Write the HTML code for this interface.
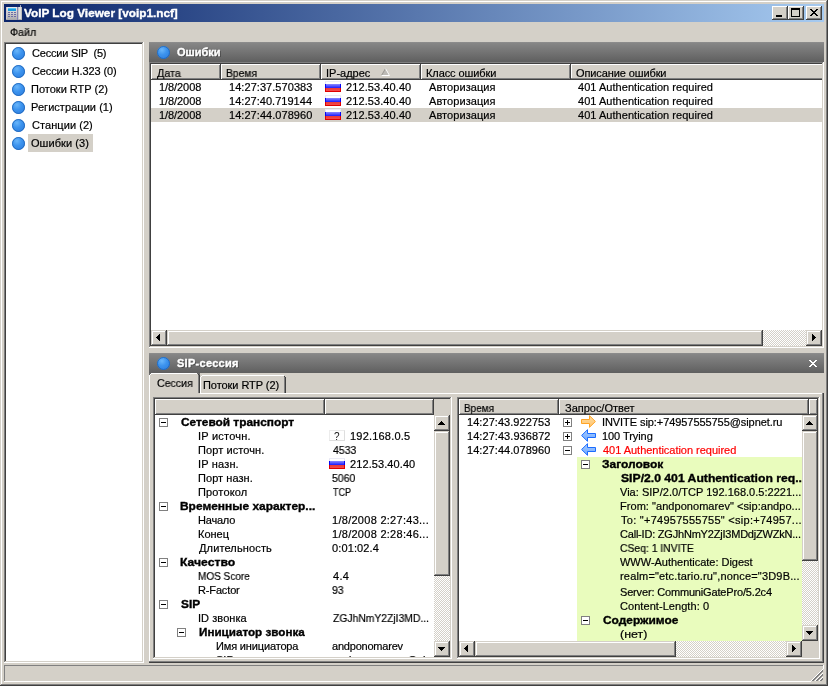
<!DOCTYPE html>
<html lang="ru"><head><meta charset="utf-8"><title>VoIP Log Viewer [voip1.ncf]</title>
<style>
html,body{margin:0;padding:0}
body{width:828px;height:686px;overflow:hidden;background:#D4D0C8;position:relative;font-family:"Liberation Sans",sans-serif;font-size:11px;color:#000}
#w{position:absolute;left:0;top:0;width:828px;height:686px;overflow:hidden}
#w>div,#w>svg,#w>span{position:absolute;box-sizing:border-box}
.t{white-space:nowrap;line-height:14px;height:14px;font-size:11px;transform-origin:0 0;will-change:transform;-webkit-text-stroke:.2px currentColor}
.b{font-weight:bold;-webkit-text-stroke:.35px currentColor}
.hd{color:#fff;text-shadow:1px 1px 0 rgba(40,40,40,.55)}
</style></head><body>
<svg width="0" height="0" style="position:absolute"><defs>
<radialGradient id="bg" cx="38%" cy="30%" r="75%"><stop offset="0" stop-color="#6ab6fa"/><stop offset=".5" stop-color="#3c93ee"/><stop offset="1" stop-color="#2f80e0"/></radialGradient>
<linearGradient id="fw" x1="0" y1="0" x2="0" y2="1"><stop offset="0" stop-color="#fff"/><stop offset="1" stop-color="#e8e8f0"/></linearGradient>
<linearGradient id="fb" x1="0" y1="0" x2="0" y2="1"><stop offset="0" stop-color="#8a8aff"/><stop offset="1" stop-color="#1a1aff"/></linearGradient>
<linearGradient id="fr" x1="0" y1="0" x2="0" y2="1"><stop offset="0" stop-color="#e83838"/><stop offset="1" stop-color="#f54a4a"/></linearGradient>
<linearGradient id="ao" x1="0" y1="0" x2="0" y2="1"><stop offset="0" stop-color="#ffdca0"/><stop offset="1" stop-color="#ffc46e"/></linearGradient>
<linearGradient id="ab" x1="0" y1="0" x2="0" y2="1"><stop offset="0" stop-color="#a8ccff"/><stop offset="1" stop-color="#6ea8ff"/></linearGradient>
<linearGradient id="ib" x1="0" y1="0" x2="0" y2="1"><stop offset="0" stop-color="#ececec"/><stop offset="1" stop-color="#a9a9ab"/></linearGradient>
<linearGradient id="ih" x1="0" y1="0" x2="1" y2="0"><stop offset="0" stop-color="#b6b6b8"/><stop offset=".5" stop-color="#f0f0f0"/><stop offset="1" stop-color="#acacae"/></linearGradient>
</defs></svg>
<div id="w">
<div style="left:0px;top:0px;width:828px;height:686px;background:#404040;"></div>
<div style="left:0px;top:0px;width:827px;height:685px;background:#D4D0C8;"></div>
<div style="left:1px;top:1px;width:826px;height:684px;background:#808080;"></div>
<div style="left:1px;top:1px;width:825px;height:683px;background:#FFFFFF;"></div>
<div style="left:2px;top:2px;width:824px;height:682px;background:#D4D0C8;"></div>
<div style="left:4px;top:4px;width:820px;height:18px;background:linear-gradient(90deg,#0A246A,#A6CAF0);"></div>
<svg style="left:6px;top:5px" width="16" height="16" viewBox="0 0 16 16" shape-rendering="crispEdges">
<rect x="14" y="0" width="1" height="2" fill="#a8a8c0"/>
<rect x="0" y="2" width="11" height="13" fill="url(#ib)"/>
<rect x="0" y="2" width="1" height="13" fill="#cfc8d0"/><rect x="0" y="14" width="11" height="1" fill="#a9a9ad"/>
<rect x="2" y="3" width="8" height="3" fill="#1c9fe0"/><rect x="2" y="3" width="8" height="1" fill="#58c4f8"/>
<g fill="#6c6ca6"><rect x="2" y="7" width="2" height="1"/><rect x="5" y="7" width="2" height="1"/><rect x="8" y="7" width="2" height="1"/><rect x="2" y="9" width="2" height="1"/><rect x="5" y="9" width="2" height="1"/><rect x="8" y="9" width="2" height="1"/><rect x="2" y="11" width="2" height="1"/><rect x="5" y="11" width="2" height="1"/><rect x="8" y="11" width="2" height="1"/></g>
<rect x="11" y="2" width="1" height="13" fill="#8484b4"/>
<rect x="12" y="2" width="4" height="13" fill="url(#ih)"/><rect x="12" y="14" width="4" height="1" fill="#b0b0b4"/>
</svg>
<div style="left:772px;top:6px;width:16px;height:14px;background:#404040;"></div>
<div style="left:772px;top:6px;width:15px;height:13px;background:#FFFFFF;"></div>
<div style="left:773px;top:7px;width:14px;height:12px;background:#808080;"></div>
<div style="left:773px;top:7px;width:13px;height:11px;background:#D4D0C8;"></div>
<div style="left:788px;top:6px;width:16px;height:14px;background:#404040;"></div>
<div style="left:788px;top:6px;width:15px;height:13px;background:#FFFFFF;"></div>
<div style="left:789px;top:7px;width:14px;height:12px;background:#808080;"></div>
<div style="left:789px;top:7px;width:13px;height:11px;background:#D4D0C8;"></div>
<div style="left:806px;top:6px;width:16px;height:14px;background:#404040;"></div>
<div style="left:806px;top:6px;width:15px;height:13px;background:#FFFFFF;"></div>
<div style="left:807px;top:7px;width:14px;height:12px;background:#808080;"></div>
<div style="left:807px;top:7px;width:13px;height:11px;background:#D4D0C8;"></div>
<div style="left:776px;top:15px;width:6px;height:2px;background:#000;"></div>
<div style="left:791px;top:8px;width:9px;height:9px;border:1px solid #000;border-top:2px solid #000"></div>
<svg style="left:810px;top:9px" width="8" height="7" viewBox="0 0 8 7" shape-rendering="crispEdges"><path d="M0 0h2v1h1v1h2v-1h1v-1h2v1h-1v1h-1v1h-1v1h1v1h1v1h1v1h-2v-1h-1v-1h-2v1h-1v1h-2v-1h1v-1h1v-1h1v-1h-1v-1h-1v-1h-1z" fill="#000"/></svg>
<div style="left:4px;top:42px;width:140px;height:621px;background:#FFFFFF;"></div>
<div style="left:4px;top:42px;width:139px;height:620px;background:#808080;"></div>
<div style="left:5px;top:43px;width:138px;height:619px;background:#D4D0C8;"></div>
<div style="left:5px;top:43px;width:137px;height:618px;background:#404040;"></div>
<div style="left:6px;top:44px;width:136px;height:617px;background:#fff;"></div>
<div style="left:28px;top:134px;width:65px;height:18px;background:#D4D0C8;"></div>
<svg style="left:10px;top:45px" width="17" height="17" viewBox="0 0 17 17"><circle cx="8.5" cy="8.5" r="6.5" fill="url(#bg)"/><circle cx="8.5" cy="8.5" r="6.0" fill="none" stroke="#1b60b4" stroke-opacity=".75" stroke-width="1"/></svg>
<svg style="left:10px;top:63px" width="17" height="17" viewBox="0 0 17 17"><circle cx="8.5" cy="8.5" r="6.5" fill="url(#bg)"/><circle cx="8.5" cy="8.5" r="6.0" fill="none" stroke="#1b60b4" stroke-opacity=".75" stroke-width="1"/></svg>
<svg style="left:10px;top:81px" width="17" height="17" viewBox="0 0 17 17"><circle cx="8.5" cy="8.5" r="6.5" fill="url(#bg)"/><circle cx="8.5" cy="8.5" r="6.0" fill="none" stroke="#1b60b4" stroke-opacity=".75" stroke-width="1"/></svg>
<svg style="left:10px;top:99px" width="17" height="17" viewBox="0 0 17 17"><circle cx="8.5" cy="8.5" r="6.5" fill="url(#bg)"/><circle cx="8.5" cy="8.5" r="6.0" fill="none" stroke="#1b60b4" stroke-opacity=".75" stroke-width="1"/></svg>
<svg style="left:10px;top:117px" width="17" height="17" viewBox="0 0 17 17"><circle cx="8.5" cy="8.5" r="6.5" fill="url(#bg)"/><circle cx="8.5" cy="8.5" r="6.0" fill="none" stroke="#1b60b4" stroke-opacity=".75" stroke-width="1"/></svg>
<svg style="left:10px;top:135px" width="17" height="17" viewBox="0 0 17 17"><circle cx="8.5" cy="8.5" r="6.5" fill="url(#bg)"/><circle cx="8.5" cy="8.5" r="6.0" fill="none" stroke="#1b60b4" stroke-opacity=".75" stroke-width="1"/></svg>
<div style="left:149px;top:42px;width:675px;height:20px;background:linear-gradient(180deg,#8e8e8e 0%,#858585 8%,#5f5f5f 100%);"></div>
<svg style="left:155px;top:44px" width="17" height="17" viewBox="0 0 17 17"><circle cx="8.5" cy="8.5" r="6.5" fill="url(#bg)"/><circle cx="8.5" cy="8.5" r="6.0" fill="none" stroke="#1b60b4" stroke-opacity=".75" stroke-width="1"/></svg>
<div style="left:149px;top:62px;width:675px;height:286px;background:#FFFFFF;"></div>
<div style="left:149px;top:62px;width:674px;height:285px;background:#808080;"></div>
<div style="left:150px;top:63px;width:673px;height:284px;background:#D4D0C8;"></div>
<div style="left:150px;top:63px;width:672px;height:283px;background:#404040;"></div>
<div style="left:151px;top:64px;width:671px;height:282px;background:#fff;"></div>
<div style="left:151px;top:64px;width:70px;height:16px;background:#404040;"></div>
<div style="left:151px;top:64px;width:69px;height:15px;background:#FFFFFF;"></div>
<div style="left:152px;top:65px;width:68px;height:14px;background:#808080;"></div>
<div style="left:152px;top:65px;width:67px;height:13px;background:#D4D0C8;"></div>
<div style="left:221px;top:64px;width:100px;height:16px;background:#404040;"></div>
<div style="left:221px;top:64px;width:99px;height:15px;background:#FFFFFF;"></div>
<div style="left:222px;top:65px;width:98px;height:14px;background:#808080;"></div>
<div style="left:222px;top:65px;width:97px;height:13px;background:#D4D0C8;"></div>
<div style="left:321px;top:64px;width:100px;height:16px;background:#404040;"></div>
<div style="left:321px;top:64px;width:99px;height:15px;background:#FFFFFF;"></div>
<div style="left:322px;top:65px;width:98px;height:14px;background:#808080;"></div>
<div style="left:322px;top:65px;width:97px;height:13px;background:#D4D0C8;"></div>
<div style="left:421px;top:64px;width:150px;height:16px;background:#404040;"></div>
<div style="left:421px;top:64px;width:149px;height:15px;background:#FFFFFF;"></div>
<div style="left:422px;top:65px;width:148px;height:14px;background:#808080;"></div>
<div style="left:422px;top:65px;width:147px;height:13px;background:#D4D0C8;"></div>
<div style="left:571px;top:64px;width:251px;height:16px;background:#404040;"></div>
<div style="left:571px;top:64px;width:251px;height:15px;background:#808080;"></div>
<div style="left:571px;top:64px;width:251px;height:14px;background:#FFFFFF;"></div>
<div style="left:572px;top:65px;width:250px;height:13px;background:#D4D0C8;"></div>
<svg style="left:381px;top:68px" width="9" height="8" viewBox="0 0 9 8"><path d="M4.5 0L9 7.5H0z" fill="#bdbbb6"/><path d="M4.5 .5L.5 7.5" stroke="#9a9892" fill="none"/><path d="M4.5 .5L8.5 7.5H.5" stroke="#fff" fill="none"/></svg>
<div style="left:151px;top:108px;width:671px;height:14px;background:#D4D0C8;"></div>
<svg style="left:325px;top:81px" width="16" height="11" viewBox="0 0 16 11" shape-rendering="crispEdges"><rect width="16" height="11" fill="#fff"/><rect width="16" height="1" fill="#ebebf6"/><rect y="1" width="1" height="2" fill="#e6e6f4"/><rect x="15" y="1" width="1" height="2" fill="#e6e6f4"/><rect y="3" width="16" height="4" fill="#0606f2"/><rect x="1" y="3" width="14" height="4" fill="url(#fb)"/><rect y="7" width="16" height="4" fill="#e00000"/><rect x="1" y="7" width="14" height="3" fill="url(#fr)"/></svg>
<svg style="left:325px;top:95px" width="16" height="11" viewBox="0 0 16 11" shape-rendering="crispEdges"><rect width="16" height="11" fill="#fff"/><rect width="16" height="1" fill="#ebebf6"/><rect y="1" width="1" height="2" fill="#e6e6f4"/><rect x="15" y="1" width="1" height="2" fill="#e6e6f4"/><rect y="3" width="16" height="4" fill="#0606f2"/><rect x="1" y="3" width="14" height="4" fill="url(#fb)"/><rect y="7" width="16" height="4" fill="#e00000"/><rect x="1" y="7" width="14" height="3" fill="url(#fr)"/></svg>
<svg style="left:325px;top:109px" width="16" height="11" viewBox="0 0 16 11" shape-rendering="crispEdges"><rect width="16" height="11" fill="#fff"/><rect width="16" height="1" fill="#ebebf6"/><rect y="1" width="1" height="2" fill="#e6e6f4"/><rect x="15" y="1" width="1" height="2" fill="#e6e6f4"/><rect y="3" width="16" height="4" fill="#0606f2"/><rect x="1" y="3" width="14" height="4" fill="url(#fb)"/><rect y="7" width="16" height="4" fill="#e00000"/><rect x="1" y="7" width="14" height="3" fill="url(#fr)"/></svg>
<div style="left:151px;top:330px;width:671px;height:16px;background:#E9E7E3;background-image:conic-gradient(#fff 25%,#D4D0C8 0 50%,#fff 0 75%,#D4D0C8 0);background-size:2px 2px;"></div>
<div style="left:151px;top:330px;width:16px;height:16px;background:#404040;"></div>
<div style="left:151px;top:330px;width:15px;height:15px;background:#D4D0C8;"></div>
<div style="left:152px;top:331px;width:14px;height:14px;background:#808080;"></div>
<div style="left:152px;top:331px;width:13px;height:13px;background:#FFFFFF;"></div>
<div style="left:153px;top:332px;width:12px;height:12px;background:#D4D0C8;"></div>
<svg style="left:156px;top:334px" width="4" height="7" viewBox="0 0 4 7" shape-rendering="crispEdges"><path d="M3 0h1v7h-1v-1h-1v-1h-1v-1h-1v-1h1v-1h1v-1h1z" fill="#000"/></svg>
<div style="left:806px;top:330px;width:16px;height:16px;background:#404040;"></div>
<div style="left:806px;top:330px;width:15px;height:15px;background:#D4D0C8;"></div>
<div style="left:807px;top:331px;width:14px;height:14px;background:#808080;"></div>
<div style="left:807px;top:331px;width:13px;height:13px;background:#FFFFFF;"></div>
<div style="left:808px;top:332px;width:12px;height:12px;background:#D4D0C8;"></div>
<svg style="left:812px;top:334px" width="4" height="7" viewBox="0 0 4 7" shape-rendering="crispEdges"><path d="M0 0h1v1h1v1h1v1h1v1h-1v1h-1v1h-1v1h-1z" fill="#000"/></svg>
<div style="left:167px;top:330px;width:596px;height:16px;background:#404040;"></div>
<div style="left:167px;top:330px;width:595px;height:15px;background:#D4D0C8;"></div>
<div style="left:168px;top:331px;width:594px;height:14px;background:#808080;"></div>
<div style="left:168px;top:331px;width:593px;height:13px;background:#FFFFFF;"></div>
<div style="left:169px;top:332px;width:592px;height:12px;background:#D4D0C8;"></div>
<div style="left:149px;top:353px;width:675px;height:20px;background:linear-gradient(180deg,#8e8e8e 0%,#858585 8%,#5f5f5f 100%);"></div>
<svg style="left:155px;top:355px" width="17" height="17" viewBox="0 0 17 17"><circle cx="8.5" cy="8.5" r="6.5" fill="url(#bg)"/><circle cx="8.5" cy="8.5" r="6.0" fill="none" stroke="#1b60b4" stroke-opacity=".75" stroke-width="1"/></svg>
<svg style="left:809px;top:360px" width="8" height="7" viewBox="0 0 8 7" shape-rendering="crispEdges"><path d="M0 0h1v1h-1zM1 0h1v1h-1zM6 0h1v1h-1zM7 0h1v1h-1zM1 1h1v1h-1zM2 1h1v1h-1zM5 1h1v1h-1zM6 1h1v1h-1zM2 2h1v1h-1zM3 2h1v1h-1zM4 2h1v1h-1zM5 2h1v1h-1zM3 3h1v1h-1zM4 3h1v1h-1zM2 4h1v1h-1zM3 4h1v1h-1zM4 4h1v1h-1zM5 4h1v1h-1zM1 5h1v1h-1zM2 5h1v1h-1zM5 5h1v1h-1zM6 5h1v1h-1zM0 6h1v1h-1zM1 6h1v1h-1zM6 6h1v1h-1zM7 6h1v1h-1z" fill="#fff"/></svg>
<div style="left:149px;top:393px;width:675px;height:270px;background:#404040;"></div>
<div style="left:149px;top:393px;width:674px;height:269px;background:#808080;"></div>
<div style="left:149px;top:393px;width:673px;height:268px;background:#FFFFFF;"></div>
<div style="left:150px;top:394px;width:672px;height:267px;background:#D4D0C8;"></div>
<div style="left:200px;top:375px;width:86px;height:18px;background:#D4D0C8;"></div>
<div style="left:202px;top:375px;width:82px;height:1px;background:#FFFFFF;"></div>
<div style="left:200px;top:377px;width:1px;height:16px;background:#FFFFFF;"></div>
<div style="left:201px;top:376px;width:1px;height:1px;background:#FFFFFF;"></div>
<div style="left:284px;top:377px;width:1px;height:16px;background:#808080;"></div>
<div style="left:285px;top:377px;width:1px;height:16px;background:#404040;"></div>
<div style="left:284px;top:376px;width:1px;height:1px;background:#404040;"></div>
<div style="left:149px;top:373px;width:51px;height:21px;background:#D4D0C8;"></div>
<div style="left:149px;top:375px;width:1px;height:19px;background:#FFFFFF;"></div>
<div style="left:150px;top:374px;width:1px;height:1px;background:#FFFFFF;"></div>
<div style="left:151px;top:373px;width:46px;height:1px;background:#FFFFFF;"></div>
<div style="left:198px;top:375px;width:1px;height:18px;background:#808080;"></div>
<div style="left:199px;top:375px;width:1px;height:18px;background:#404040;"></div>
<div style="left:198px;top:374px;width:1px;height:1px;background:#404040;"></div>
<div style="left:197px;top:373px;width:3px;height:1px;background:#6a6a6a;"></div>
<div style="left:199px;top:374px;width:1px;height:1px;background:#6a6a6a;"></div>
<div style="left:149px;top:373px;width:2px;height:1px;background:#6a6a6a;"></div>
<div style="left:149px;top:374px;width:1px;height:1px;background:#6a6a6a;"></div>
<div style="left:153px;top:397px;width:299px;height:262px;background:#FFFFFF;"></div>
<div style="left:153px;top:397px;width:298px;height:261px;background:#808080;"></div>
<div style="left:154px;top:398px;width:297px;height:260px;background:#D4D0C8;"></div>
<div style="left:154px;top:398px;width:296px;height:259px;background:#404040;"></div>
<div style="left:155px;top:399px;width:295px;height:258px;background:#fff;"></div>
<div style="left:155px;top:399px;width:170px;height:16px;background:#404040;"></div>
<div style="left:155px;top:399px;width:169px;height:15px;background:#FFFFFF;"></div>
<div style="left:156px;top:400px;width:168px;height:14px;background:#808080;"></div>
<div style="left:156px;top:400px;width:167px;height:13px;background:#D4D0C8;"></div>
<div style="left:325px;top:399px;width:109px;height:16px;background:#404040;"></div>
<div style="left:325px;top:399px;width:108px;height:15px;background:#FFFFFF;"></div>
<div style="left:326px;top:400px;width:107px;height:14px;background:#808080;"></div>
<div style="left:326px;top:400px;width:106px;height:13px;background:#D4D0C8;"></div>
<div style="left:434px;top:399px;width:16px;height:16px;background:#D4D0C8;"></div>
<div style="left:434px;top:415px;width:16px;height:242px;background:#E9E7E3;background-image:conic-gradient(#fff 25%,#D4D0C8 0 50%,#fff 0 75%,#D4D0C8 0);background-size:2px 2px;"></div>
<div style="left:434px;top:415px;width:16px;height:16px;background:#404040;"></div>
<div style="left:434px;top:415px;width:15px;height:15px;background:#D4D0C8;"></div>
<div style="left:435px;top:416px;width:14px;height:14px;background:#808080;"></div>
<div style="left:435px;top:416px;width:13px;height:13px;background:#FFFFFF;"></div>
<div style="left:436px;top:417px;width:12px;height:12px;background:#D4D0C8;"></div>
<svg style="left:438px;top:421px" width="7" height="4" viewBox="0 0 7 4" shape-rendering="crispEdges"><path d="M3 0h1v1h1v1h1v1h1v1h-7v-1h1v-1h1v-1h1z" fill="#000"/></svg>
<div style="left:434px;top:641px;width:16px;height:16px;background:#404040;"></div>
<div style="left:434px;top:641px;width:15px;height:15px;background:#D4D0C8;"></div>
<div style="left:435px;top:642px;width:14px;height:14px;background:#808080;"></div>
<div style="left:435px;top:642px;width:13px;height:13px;background:#FFFFFF;"></div>
<div style="left:436px;top:643px;width:12px;height:12px;background:#D4D0C8;"></div>
<svg style="left:438px;top:647px" width="7" height="4" viewBox="0 0 7 4" shape-rendering="crispEdges"><path d="M0 0h7v1h-1v1h-1v1h-1v1h-1v-1h-1v-1h-1v-1h-1z" fill="#000"/></svg>
<div style="left:434px;top:431px;width:16px;height:145px;background:#404040;"></div>
<div style="left:434px;top:431px;width:15px;height:144px;background:#D4D0C8;"></div>
<div style="left:435px;top:432px;width:14px;height:143px;background:#808080;"></div>
<div style="left:435px;top:432px;width:13px;height:142px;background:#FFFFFF;"></div>
<div style="left:436px;top:433px;width:12px;height:141px;background:#D4D0C8;"></div>
<svg style="left:159px;top:418px" width="9" height="9" viewBox="0 0 9 9" shape-rendering="crispEdges"><rect x=".5" y=".5" width="8" height="8" fill="#fff" stroke="#808080"/><path d="M2 4h5v1h-5z" fill="#000"/></svg>
<svg style="left:159px;top:502px" width="9" height="9" viewBox="0 0 9 9" shape-rendering="crispEdges"><rect x=".5" y=".5" width="8" height="8" fill="#fff" stroke="#808080"/><path d="M2 4h5v1h-5z" fill="#000"/></svg>
<svg style="left:159px;top:558px" width="9" height="9" viewBox="0 0 9 9" shape-rendering="crispEdges"><rect x=".5" y=".5" width="8" height="8" fill="#fff" stroke="#808080"/><path d="M2 4h5v1h-5z" fill="#000"/></svg>
<svg style="left:159px;top:600px" width="9" height="9" viewBox="0 0 9 9" shape-rendering="crispEdges"><rect x=".5" y=".5" width="8" height="8" fill="#fff" stroke="#808080"/><path d="M2 4h5v1h-5z" fill="#000"/></svg>
<svg style="left:177px;top:628px" width="9" height="9" viewBox="0 0 9 9" shape-rendering="crispEdges"><rect x=".5" y=".5" width="8" height="8" fill="#fff" stroke="#808080"/><path d="M2 4h5v1h-5z" fill="#000"/></svg>
<div style="left:329px;top:430px;width:16px;height:11px;background:#fefefe;border:1px solid #ececec;border-right-color:#dedede;border-bottom-color:#dedede"></div>
<span class="t" style="left:334px;top:429.5px;font-size:10px;color:#111;-webkit-text-stroke:0">?</span>
<svg style="left:329px;top:458px" width="16" height="11" viewBox="0 0 16 11" shape-rendering="crispEdges"><rect width="16" height="11" fill="#fff"/><rect width="16" height="1" fill="#ebebf6"/><rect y="1" width="1" height="2" fill="#e6e6f4"/><rect x="15" y="1" width="1" height="2" fill="#e6e6f4"/><rect y="3" width="16" height="4" fill="#0606f2"/><rect x="1" y="3" width="14" height="4" fill="url(#fb)"/><rect y="7" width="16" height="4" fill="#e00000"/><rect x="1" y="7" width="14" height="3" fill="url(#fr)"/></svg>
<div style="left:155px;top:653px;width:279px;height:4px;overflow:hidden"><span class="t" style="position:absolute;left:61px;top:0">SIP-адрес</span><span class="t" style="position:absolute;left:178px;top:0">andponomarev@si...</span></div>
<div style="left:457px;top:397px;width:363px;height:262px;background:#FFFFFF;"></div>
<div style="left:457px;top:397px;width:362px;height:261px;background:#808080;"></div>
<div style="left:458px;top:398px;width:361px;height:260px;background:#D4D0C8;"></div>
<div style="left:458px;top:398px;width:360px;height:259px;background:#404040;"></div>
<div style="left:459px;top:399px;width:359px;height:258px;background:#fff;"></div>
<div style="left:459px;top:399px;width:100px;height:16px;background:#404040;"></div>
<div style="left:459px;top:399px;width:99px;height:15px;background:#FFFFFF;"></div>
<div style="left:460px;top:400px;width:98px;height:14px;background:#808080;"></div>
<div style="left:460px;top:400px;width:97px;height:13px;background:#D4D0C8;"></div>
<div style="left:559px;top:399px;width:250px;height:16px;background:#404040;"></div>
<div style="left:559px;top:399px;width:249px;height:15px;background:#FFFFFF;"></div>
<div style="left:560px;top:400px;width:248px;height:14px;background:#808080;"></div>
<div style="left:560px;top:400px;width:247px;height:13px;background:#D4D0C8;"></div>
<div style="left:809px;top:399px;width:9px;height:16px;background:#404040;"></div>
<div style="left:809px;top:399px;width:8px;height:15px;background:#FFFFFF;"></div>
<div style="left:810px;top:400px;width:7px;height:14px;background:#808080;"></div>
<div style="left:810px;top:400px;width:6px;height:13px;background:#D4D0C8;"></div>
<div style="left:577px;top:457px;width:225px;height:184px;background:#E9FCBD;"></div>
<div style="left:802px;top:415px;width:16px;height:226px;background:#E9E7E3;background-image:conic-gradient(#fff 25%,#D4D0C8 0 50%,#fff 0 75%,#D4D0C8 0);background-size:2px 2px;"></div>
<div style="left:802px;top:415px;width:16px;height:16px;background:#404040;"></div>
<div style="left:802px;top:415px;width:15px;height:15px;background:#D4D0C8;"></div>
<div style="left:803px;top:416px;width:14px;height:14px;background:#808080;"></div>
<div style="left:803px;top:416px;width:13px;height:13px;background:#FFFFFF;"></div>
<div style="left:804px;top:417px;width:12px;height:12px;background:#D4D0C8;"></div>
<svg style="left:806px;top:421px" width="7" height="4" viewBox="0 0 7 4" shape-rendering="crispEdges"><path d="M3 0h1v1h1v1h1v1h1v1h-7v-1h1v-1h1v-1h1z" fill="#000"/></svg>
<div style="left:802px;top:625px;width:16px;height:16px;background:#404040;"></div>
<div style="left:802px;top:625px;width:15px;height:15px;background:#D4D0C8;"></div>
<div style="left:803px;top:626px;width:14px;height:14px;background:#808080;"></div>
<div style="left:803px;top:626px;width:13px;height:13px;background:#FFFFFF;"></div>
<div style="left:804px;top:627px;width:12px;height:12px;background:#D4D0C8;"></div>
<svg style="left:806px;top:631px" width="7" height="4" viewBox="0 0 7 4" shape-rendering="crispEdges"><path d="M0 0h7v1h-1v1h-1v1h-1v1h-1v-1h-1v-1h-1v-1h-1z" fill="#000"/></svg>
<div style="left:802px;top:431px;width:16px;height:130px;background:#404040;"></div>
<div style="left:802px;top:431px;width:15px;height:129px;background:#D4D0C8;"></div>
<div style="left:803px;top:432px;width:14px;height:128px;background:#808080;"></div>
<div style="left:803px;top:432px;width:13px;height:127px;background:#FFFFFF;"></div>
<div style="left:804px;top:433px;width:12px;height:126px;background:#D4D0C8;"></div>
<div style="left:459px;top:641px;width:343px;height:16px;background:#E9E7E3;background-image:conic-gradient(#fff 25%,#D4D0C8 0 50%,#fff 0 75%,#D4D0C8 0);background-size:2px 2px;"></div>
<div style="left:459px;top:641px;width:16px;height:16px;background:#404040;"></div>
<div style="left:459px;top:641px;width:15px;height:15px;background:#D4D0C8;"></div>
<div style="left:460px;top:642px;width:14px;height:14px;background:#808080;"></div>
<div style="left:460px;top:642px;width:13px;height:13px;background:#FFFFFF;"></div>
<div style="left:461px;top:643px;width:12px;height:12px;background:#D4D0C8;"></div>
<svg style="left:464px;top:645px" width="4" height="7" viewBox="0 0 4 7" shape-rendering="crispEdges"><path d="M3 0h1v7h-1v-1h-1v-1h-1v-1h-1v-1h1v-1h1v-1h1z" fill="#000"/></svg>
<div style="left:786px;top:641px;width:16px;height:16px;background:#404040;"></div>
<div style="left:786px;top:641px;width:15px;height:15px;background:#D4D0C8;"></div>
<div style="left:787px;top:642px;width:14px;height:14px;background:#808080;"></div>
<div style="left:787px;top:642px;width:13px;height:13px;background:#FFFFFF;"></div>
<div style="left:788px;top:643px;width:12px;height:12px;background:#D4D0C8;"></div>
<svg style="left:792px;top:645px" width="4" height="7" viewBox="0 0 4 7" shape-rendering="crispEdges"><path d="M0 0h1v1h1v1h1v1h1v1h-1v1h-1v1h-1v1h-1z" fill="#000"/></svg>
<div style="left:475px;top:641px;width:201px;height:16px;background:#404040;"></div>
<div style="left:475px;top:641px;width:200px;height:15px;background:#D4D0C8;"></div>
<div style="left:476px;top:642px;width:199px;height:14px;background:#808080;"></div>
<div style="left:476px;top:642px;width:198px;height:13px;background:#FFFFFF;"></div>
<div style="left:477px;top:643px;width:197px;height:12px;background:#D4D0C8;"></div>
<div style="left:802px;top:641px;width:16px;height:16px;background:#D4D0C8;"></div>
<svg style="left:563px;top:418px" width="9" height="9" viewBox="0 0 9 9" shape-rendering="crispEdges"><rect x=".5" y=".5" width="8" height="8" fill="#fff" stroke="#808080"/><path d="M2 4h5v1h-5zM4 2h1v5h-1z" fill="#000"/></svg>
<svg style="left:563px;top:432px" width="9" height="9" viewBox="0 0 9 9" shape-rendering="crispEdges"><rect x=".5" y=".5" width="8" height="8" fill="#fff" stroke="#808080"/><path d="M2 4h5v1h-5zM4 2h1v5h-1z" fill="#000"/></svg>
<svg style="left:563px;top:446px" width="9" height="9" viewBox="0 0 9 9" shape-rendering="crispEdges"><rect x=".5" y=".5" width="8" height="8" fill="#fff" stroke="#808080"/><path d="M2 4h5v1h-5z" fill="#000"/></svg>
<svg style="left:581px;top:460px" width="9" height="9" viewBox="0 0 9 9" shape-rendering="crispEdges"><rect x=".5" y=".5" width="8" height="8" fill="#fff" stroke="#808080"/><path d="M2 4h5v1h-5z" fill="#000"/></svg>
<svg style="left:581px;top:616px" width="9" height="9" viewBox="0 0 9 9" shape-rendering="crispEdges"><rect x=".5" y=".5" width="8" height="8" fill="#fff" stroke="#808080"/><path d="M2 4h5v1h-5z" fill="#000"/></svg>
<svg style="left:580px;top:415px" width="17" height="14" viewBox="0 0 17 14"><path d="M1.5 4.5H9.5V0.7L15.4 6.5L9.5 12.3V8.5H1.5Z" fill="url(#ao)" stroke="#ffa425" stroke-width="1" stroke-linejoin="miter"/></svg>
<svg style="left:580px;top:429px" width="17" height="14" viewBox="0 0 17 14"><path d="M1.5 4.5H9.5V0.7L15.4 6.5L9.5 12.3V8.5H1.5Z" fill="url(#ab)" stroke="#1a6cff" stroke-width="1" stroke-linejoin="miter" transform="translate(17,0) scale(-1,1)"/></svg>
<svg style="left:580px;top:443px" width="17" height="14" viewBox="0 0 17 14"><path d="M1.5 4.5H9.5V0.7L15.4 6.5L9.5 12.3V8.5H1.5Z" fill="url(#ab)" stroke="#1a6cff" stroke-width="1" stroke-linejoin="miter" transform="translate(17,0) scale(-1,1)"/></svg>
<div style="left:4px;top:665px;width:820px;height:17px;background:#FFFFFF;"></div>
<div style="left:4px;top:665px;width:819px;height:16px;background:#808080;"></div>
<div style="left:5px;top:666px;width:818px;height:15px;background:#D4D0C8;"></div>
<svg style="left:811px;top:669px" width="13" height="13" viewBox="0 0 13 13" shape-rendering="crispEdges"><rect width="13" height="13" fill="#D4D0C8"/><path d="M0 11h1v1h-1zM1 10h1v1h-1zM2 9h1v1h-1zM3 8h1v1h-1zM4 7h1v1h-1zM4 11h1v1h-1zM5 6h1v1h-1zM5 10h1v1h-1zM6 5h1v1h-1zM6 9h1v1h-1zM7 4h1v1h-1zM7 8h1v1h-1zM8 3h1v1h-1zM8 7h1v1h-1zM8 11h1v1h-1zM9 2h1v1h-1zM9 6h1v1h-1zM9 10h1v1h-1zM10 1h1v1h-1zM10 5h1v1h-1zM10 9h1v1h-1zM11 0h1v1h-1zM11 4h1v1h-1zM11 8h1v1h-1z" fill="#fff"/><path d="M1 11h1v1h-1zM2 10h1v1h-1zM2 11h1v1h-1zM3 9h1v1h-1zM3 10h1v1h-1zM4 8h1v1h-1zM4 9h1v1h-1zM5 7h1v1h-1zM5 8h1v1h-1zM5 11h1v1h-1zM6 6h1v1h-1zM6 7h1v1h-1zM6 10h1v1h-1zM6 11h1v1h-1zM7 5h1v1h-1zM7 6h1v1h-1zM7 9h1v1h-1zM7 10h1v1h-1zM8 4h1v1h-1zM8 5h1v1h-1zM8 8h1v1h-1zM8 9h1v1h-1zM9 3h1v1h-1zM9 4h1v1h-1zM9 7h1v1h-1zM9 8h1v1h-1zM9 11h1v1h-1zM10 2h1v1h-1zM10 3h1v1h-1zM10 6h1v1h-1zM10 7h1v1h-1zM10 10h1v1h-1zM10 11h1v1h-1zM11 1h1v1h-1zM11 2h1v1h-1zM11 5h1v1h-1zM11 6h1v1h-1zM11 9h1v1h-1zM11 10h1v1h-1z" fill="#808080"/></svg>
<span class="t b" id="t0" style="left:24.00px;top:6px;transform:scaleX(1.0707);color:#fff;">VoIP Log Viewer [voip1.ncf]</span>
<span class="t" id="t1" style="left:9.72px;top:25px;transform:scaleX(0.9675);">Файл</span>
<span class="t" id="t2" style="left:31.96px;top:46px;letter-spacing:-0.214px;">Сессии SIP &nbsp;(5)</span>
<span class="t" id="t3" style="left:31.96px;top:64px;letter-spacing:-0.110px;">Сессии H.323 (0)</span>
<span class="t" id="t4" style="left:31.07px;top:82px;">Потоки RTP (2)</span>
<span class="t" id="t5" style="left:31.04px;top:100px;letter-spacing:0.049px;">Регистрации (1)</span>
<span class="t" id="t6" style="left:31.96px;top:118px;letter-spacing:0.064px;">Станции (2)</span>
<span class="t" id="t7" style="left:31.28px;top:136px;letter-spacing:0.066px;">Ошибки (3)</span>
<span class="t b hd" id="t8" style="left:176.64px;top:45px;">Ошибки</span>
<span class="t b hd" id="t9" style="left:176.79px;top:356px;letter-spacing:0.281px;">SIP-сессия</span>
<span class="t" id="t10" style="left:157.00px;top:66px;transform:scaleX(0.9764);">Дата</span>
<span class="t" id="t11" style="left:226.10px;top:66px;transform:scaleX(0.9375);">Время</span>
<span class="t" id="t12" style="left:326.00px;top:66px;">IP-адрес</span>
<span class="t" id="t13" style="left:426.04px;top:66px;letter-spacing:-0.091px;">Класс ошибки</span>
<span class="t" id="t14" style="left:576.28px;top:66px;letter-spacing:-0.107px;">Описание ошибки</span>
<span class="t" id="t15" style="left:159.03px;top:80px;letter-spacing:-0.071px;">1/8/2008</span>
<span class="t" id="t16" style="left:229.03px;top:80px;letter-spacing:0.054px;">14:27:37.570383</span>
<span class="t" id="t17" style="left:346.28px;top:80px;letter-spacing:0.091px;">212.53.40.40</span>
<span class="t" id="t18" style="left:428.95px;top:80px;letter-spacing:0.075px;">Авторизация</span>
<span class="t" id="t19" style="left:578.00px;top:80px;letter-spacing:0.038px;">401 Authentication required</span>
<span class="t" id="t20" style="left:159.03px;top:94px;letter-spacing:-0.071px;">1/8/2008</span>
<span class="t" id="t21" style="left:229.03px;top:94px;letter-spacing:0.033px;">14:27:40.719144</span>
<span class="t" id="t22" style="left:346.28px;top:94px;letter-spacing:0.091px;">212.53.40.40</span>
<span class="t" id="t23" style="left:428.95px;top:94px;letter-spacing:0.075px;">Авторизация</span>
<span class="t" id="t24" style="left:578.00px;top:94px;letter-spacing:0.038px;">401 Authentication required</span>
<span class="t" id="t25" style="left:159.03px;top:108px;letter-spacing:-0.071px;">1/8/2008</span>
<span class="t" id="t26" style="left:229.03px;top:108px;letter-spacing:0.050px;">14:27:44.078960</span>
<span class="t" id="t27" style="left:346.28px;top:108px;letter-spacing:0.091px;">212.53.40.40</span>
<span class="t" id="t28" style="left:428.95px;top:108px;letter-spacing:0.075px;">Авторизация</span>
<span class="t" id="t29" style="left:578.00px;top:108px;letter-spacing:0.038px;">401 Authentication required</span>
<span class="t" id="t30" style="left:156.96px;top:376px;transform:scaleX(0.9632);">Сессия</span>
<span class="t" id="t31" style="left:203.02px;top:378px;letter-spacing:-0.058px;">Потоки RTP (2)</span>
<span class="t b" id="t32" style="left:180.52px;top:415px;transform:scaleX(1.0776);">Сетевой транспорт</span>
<span class="t" id="t33" style="left:198.00px;top:429px;letter-spacing:0.223px;">IP источн.</span>
<span class="t" id="t34" style="left:350.13px;top:429px;letter-spacing:0.200px;">192.168.0.5</span>
<span class="t" id="t35" style="left:198.07px;top:443px;letter-spacing:0.091px;">Порт источн.</span>
<span class="t" id="t36" style="left:333.00px;top:443px;transform:scaleX(0.9583);">4533</span>
<span class="t" id="t37" style="left:198.00px;top:457px;letter-spacing:0.169px;">IP назн.</span>
<span class="t" id="t38" style="left:350.28px;top:457px;letter-spacing:0.091px;">212.53.40.40</span>
<span class="t" id="t39" style="left:198.07px;top:471px;letter-spacing:0.063px;">Порт назн.</span>
<span class="t" id="t40" style="left:332.31px;top:471px;transform:scaleX(0.9583);">5060</span>
<span class="t" id="t41" style="left:198.07px;top:485px;letter-spacing:0.143px;">Протокол</span>
<span class="t" id="t42" style="left:332.82px;top:485px;transform:scaleX(0.8182);">TCP</span>
<span class="t b" id="t43" style="left:180.06px;top:499px;transform:scaleX(1.0847);">Временные характер...</span>
<span class="t" id="t44" style="left:198.04px;top:513px;letter-spacing:-0.200px;">Начало</span>
<span class="t" id="t45" style="left:332.13px;top:513px;letter-spacing:0.278px;">1/8/2008 2:27:43...</span>
<span class="t" id="t46" style="left:198.04px;top:527px;">Конец</span>
<span class="t" id="t47" style="left:332.13px;top:527px;letter-spacing:0.278px;">1/8/2008 2:28:46...</span>
<span class="t" id="t48" style="left:199.00px;top:541px;letter-spacing:0.136px;">Длительность</span>
<span class="t" id="t49" style="left:332.46px;top:541px;letter-spacing:0.125px;">0:01:02.4</span>
<span class="t b" id="t50" style="left:180.04px;top:555px;transform:scaleX(1.1072);">Качество</span>
<span class="t" id="t51" style="left:198.13px;top:569px;transform:scaleX(0.9107);">MOS Score</span>
<span class="t" id="t52" style="left:333.00px;top:569px;letter-spacing:0.278px;">4.4</span>
<span class="t" id="t53" style="left:198.04px;top:583px;letter-spacing:-0.143px;">R-Factor</span>
<span class="t" id="t54" style="left:332.28px;top:583px;transform:scaleX(0.9572);">93</span>
<span class="t b" id="t55" style="left:180.68px;top:597px;transform:scaleX(1.0793);">SIP</span>
<span class="t" id="t56" style="left:198.00px;top:611px;letter-spacing:0.062px;">ID звонка</span>
<span class="t" id="t57" style="left:332.76px;top:611px;transform:scaleX(0.9406);">ZGJhNmY2ZjI3MD...</span>
<span class="t b" id="t58" style="left:198.99px;top:625px;transform:scaleX(1.0600);">Инициатор звонка</span>
<span class="t" id="t59" style="left:215.94px;top:639px;letter-spacing:-0.154px;">Имя инициатора</span>
<span class="t" id="t60" style="left:332.37px;top:639px;letter-spacing:-0.211px;">andponomarev</span>
<span class="t" id="t61" style="left:464.13px;top:401px;transform:scaleX(0.9062);">Время</span>
<span class="t" id="t62" style="left:564.87px;top:401px;letter-spacing:-0.014px;">Запрос/Ответ</span>
<span class="t" id="t63" style="left:467.03px;top:415px;letter-spacing:0.054px;">14:27:43.922753</span>
<span class="t" id="t64" style="left:467.03px;top:429px;letter-spacing:0.060px;">14:27:43.936872</span>
<span class="t" id="t65" style="left:467.03px;top:443px;letter-spacing:0.050px;">14:27:44.078960</span>
<span class="t" id="t66" style="left:602.00px;top:415px;letter-spacing:-0.072px;">INVITE sip:+74957555755@sipnet.ru</span>
<span class="t" id="t67" style="left:602.13px;top:429px;letter-spacing:-0.067px;">100 Trying</span>
<span class="t" id="t68" style="left:603.00px;top:443px;letter-spacing:-0.026px;color:#f00;">401 Authentication required</span>
<span class="t b" id="t69" style="left:602.46px;top:457px;transform:scaleX(1.0893);">Заголовок</span>
<span class="t b" id="t70" style="left:620.66px;top:471px;transform:scaleX(1.1074);">SIP/2.0 401 Authentication req..</span>
<span class="t" id="t71" style="left:620.10px;top:485px;letter-spacing:0.020px;">Via: SIP/2.0/TCP 192.168.0.5:2221...</span>
<span class="t" id="t72" style="left:619.94px;top:499px;letter-spacing:0.045px;">From: "andponomarev" &lt;sip:andpo...</span>
<span class="t" id="t73" style="left:620.72px;top:513px;letter-spacing:0.266px;">To: "+74957555755" &lt;sip:+74957...</span>
<span class="t" id="t74" style="left:620.06px;top:527px;letter-spacing:-0.207px;">Call-ID: ZGJhNmY2ZjI3MDdjZWZkN...</span>
<span class="t" id="t75" style="left:620.06px;top:541px;transform:scaleX(0.9423);">CSeq: 1 INVITE</span>
<span class="t" id="t76" style="left:620.10px;top:555px;letter-spacing:-0.022px;">WWW-Authenticate: Digest</span>
<span class="t" id="t77" style="left:619.50px;top:569px;letter-spacing:0.174px;">realm="etc.tario.ru",nonce="3D9B...</span>
<span class="t" id="t78" style="left:619.58px;top:585px;letter-spacing:-0.165px;">Server: CommuniGatePro/5.2c4</span>
<span class="t" id="t79" style="left:620.06px;top:599px;letter-spacing:0.059px;">Content-Length: 0</span>
<span class="t b" id="t80" style="left:602.62px;top:613px;transform:scaleX(1.0828);">Содержимое</span>
<span class="t" id="t81" style="left:620.08px;top:627px;transform:scaleX(1.1304);">(нет)</span>
</div>
</body></html>
